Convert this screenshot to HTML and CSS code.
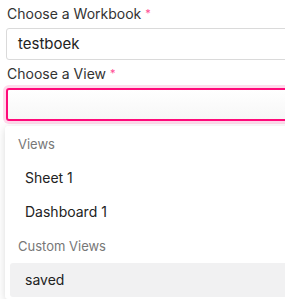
FILE: index.html
```html
<!DOCTYPE html>
<html lang="en">
<head>
    <meta charset="UTF-8">
    <title>Choose a View</title>
    <link rel="stylesheet" href="styles.css">
</head>
<body>

    <div class="form">
        <!-- Workbook -->
        <div class="field">
            <label class="field-label">Choose a Workbook <span class="req">*</span></label>
            <div class="select-box">testboek</div>
        </div>

        <!-- View -->
        <div class="field">
            <label class="field-label">Choose a View <span class="req">*</span></label>
            <div class="select-box focused"></div>

            <div class="menu">
                <div class="group-title">Views</div>
                <div class="option">Sheet 1</div>
                <div class="option">Dashboard 1</div>
                <div class="group-title">Custom Views</div>
                <div class="option active">saved</div>
            </div>
        </div>
    </div>

</body>
</html>
```

FILE: styles.css
```css
/* General Styling */
html, body {
    overflow: hidden;
}

body {
    margin: 0;
    font-family: 'Inter', 'Liberation Sans', sans-serif;
    background: white;
    color: #333;
}

.form {
    height: 299px;
    overflow: hidden;
    padding: 5px 0 0 6px;
    box-sizing: border-box;
}

.field {
    display: flex;
    flex-direction: column;
    margin-right: -40px;
}

.field-label {
    font-size: 14px;
    line-height: 17px;
    margin: 0 0 6px 1px;
    color: #333;
}

.req {
    color: #ff4a94;
    font-size: 11px;
    vertical-align: top;
}

/* Select boxes */
.select-box {
    height: 30px;
    border: 1px solid #dadada;
    border-radius: 3px;
    padding: 0 11px;
    font-size: 15px;
    line-height: 30px;
    color: #222;
    margin-bottom: 5px;
}

.select-box.focused {
    border: 2px solid #ff0a7a;
    height: 29px;
    background: linear-gradient(#fff, #f7f7f7);
    box-shadow: 0 0 0 3px rgba(255, 10, 122, 0.15);
    margin-bottom: 0;
}

/* Dropdown */
.menu {
    margin: 5px 0 0 -1px;
    padding: 1px 5px 2px 5px;
    background: white;
    box-shadow: 0 2px 8px rgba(0, 0, 0, 0.15);
    border-radius: 3px;
}

.group-title {
    height: 34px;
    line-height: 34px;
    padding-left: 8px;
    font-size: 13px;
    color: #777;
}

.option {
    height: 34px;
    line-height: 34px;
    padding-left: 15px;
    font-size: 14px;
    color: #222;
    border-radius: 3px;
}

.option.active {
    background: #f1f1f2;
}
```
